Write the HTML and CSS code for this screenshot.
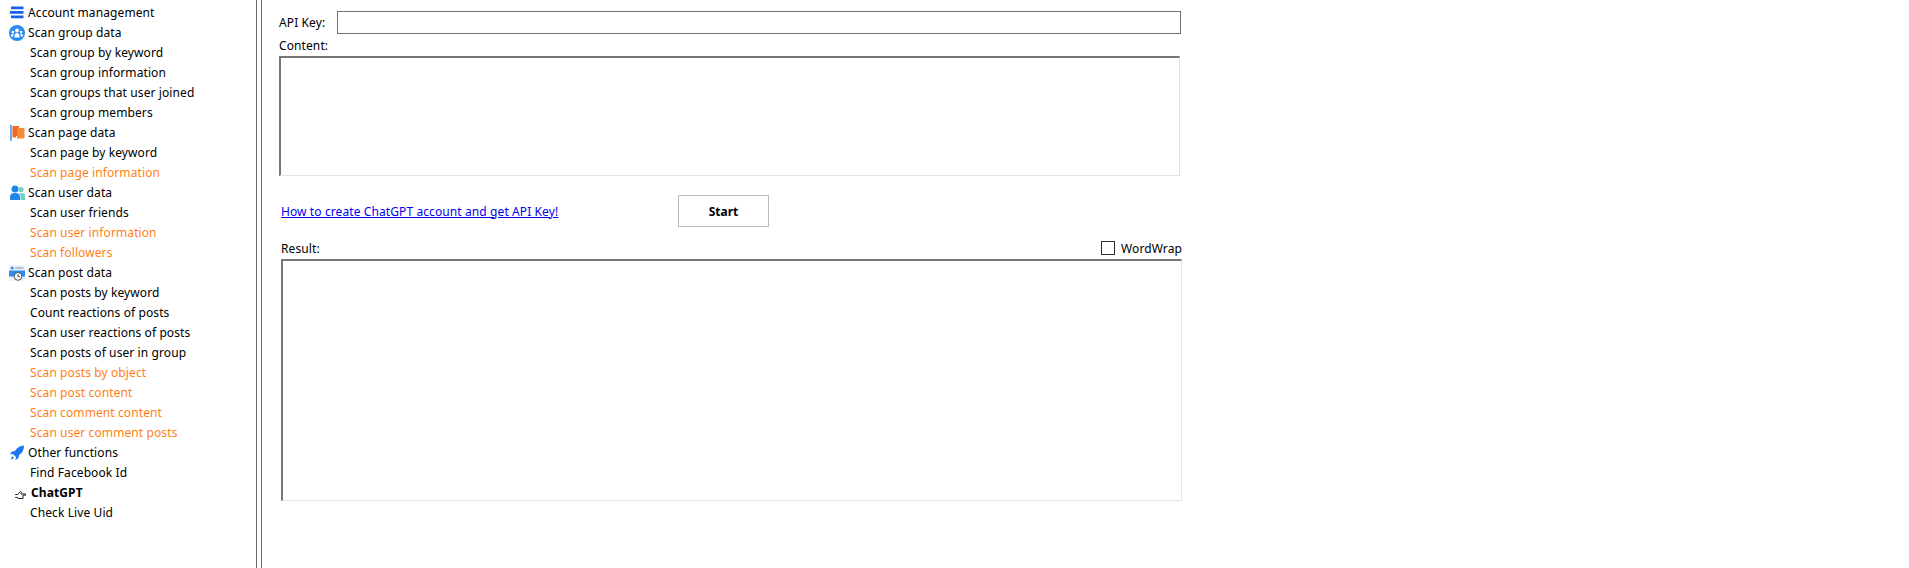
FILE: index.html
```html
<!DOCTYPE html>
<html lang="en">
<head>
<meta charset="utf-8">
<title>ChatGPT</title>
<link rel="stylesheet" href="styles.css">
</head>
<body>
<div class="app">
  <nav class="tree">
    <div class="row parent"><svg class="ico" viewBox="0 0 16 16"><path fill="#1a5fe8" d="M2 1.500h12.500v2.800H2zM1 6h13.500v2.800H1zM2 10.500h12.500v2.800H2z"/></svg><span>Account management</span></div>
    <div class="row parent"><svg class="ico" viewBox="0 0 16 16"><circle cx="8" cy="8" r="8" fill="#2a8cf0"/><circle cx="8" cy="5.500" r="1.900" fill="#fff"/><circle cx="3.900" cy="7" r="1.300" fill="#fff"/><circle cx="12.100" cy="7" r="1.300" fill="#fff"/><path fill="#fff" d="M5.400 12.500c0-3.200 1-4.500 2.600-4.500s2.600 1.300 2.600 4.500zM2 11.500c0-1.800.6-2.900 1.900-2.900l.7.200c-.2.800-.3 1.700-.3 2.700zM14 11.500c0-1.800-.6-2.900-1.900-2.900l-.7.200c.2.800.3 1.700.3 2.700z"/></svg><span>Scan group data</span></div>
    <div class="row child">Scan group by keyword</div>
    <div class="row child">Scan group information</div>
    <div class="row child">Scan groups that user joined</div>
    <div class="row child">Scan group members</div>
    <div class="row parent"><svg class="ico" viewBox="0 0 16 16"><path fill="#2f8df0" d="M1.300 0h1.400v16H1.300z"/><path fill="#f26a21" d="M3.500 1H10v10H7v1.500H3.500z"/><path fill="#f58a3a" d="M8 3h7.500v10.500H8z"/></svg><span>Scan page data</span></div>
    <div class="row child">Scan page by keyword</div>
    <div class="row child warn">Scan page information</div>
    <div class="row parent"><svg class="ico" viewBox="0 0 16 16"><circle cx="6" cy="4" r="3.500" fill="#1f86ea"/><path fill="#1f86ea" d="M1 15v-3.500C1 9 3 8 6 8s5 1 5 3.500V15z"/><circle cx="12" cy="4.500" r="2.600" fill="#6fd0c8"/><path fill="#6fd0c8" d="M11.500 15v-4c0-1.200-.5-2-1.200-2.500C11 8 12 8 13 8c2 0 3 1.200 3 3v4z"/></svg><span>Scan user data</span></div>
    <div class="row child">Scan user friends</div>
    <div class="row child warn">Scan user information</div>
    <div class="row child warn">Scan followers</div>
    <div class="row parent"><svg class="ico" viewBox="0 0 16 16"><rect width="16" height="16" fill="#eef3f8"/><path fill="#2a8cf0" d="M0 5.500h16v6H0z"/><circle cx="3.200" cy="3" r="1.500" fill="#2a8cf0"/><path fill="#8aa0b0" d="M6 2.400h8.500v1.200H6z"/><circle cx="9" cy="11.400" r="3.900" fill="#fff" stroke="#46525e"/><path fill="none" stroke="#46525e" d="M9 9v2.700h2"/></svg><span>Scan post data</span></div>
    <div class="row child">Scan posts by keyword</div>
    <div class="row child">Count reactions of posts</div>
    <div class="row child">Scan user reactions of posts</div>
    <div class="row child">Scan posts of user in group</div>
    <div class="row child warn">Scan posts by object</div>
    <div class="row child warn">Scan post content</div>
    <div class="row child warn">Scan comment content</div>
    <div class="row child warn">Scan user comment posts</div>
    <div class="row parent"><svg class="ico" viewBox="0 0 16 16"><path fill="#1a78ee" d="M15 .5c-4 .3-7 2-9 5.500l-3 .5L1 9.500l3-.5L7 12l-.5 3 3-2 .5-3c3.500-2 5-5.500 5-9.500z"/><path fill="#1a78ee" d="M3 11l2 2-3 2z"/></svg><span>Other functions</span></div>
    <div class="row child">Find Facebook Id</div>
    <div class="row current"><svg class="hand" viewBox="0 0 11 8"><path fill="none" stroke="#222" d="M.2 3.500h2.300L5.500.6l1.300.8-.9 1.600h4.800v1.200H8v3.300H3l-.5-1H.2"/></svg><span>ChatGPT</span></div>
    <div class="row child">Check Live Uid</div>
  </nav>
  <main class="panel">
    <div class="key-row">
      <label class="key-label">API Key:</label>
      <input class="key-input" type="text">
    </div>
    <div class="content-label">Content:</div>
    <div class="box content-box"></div>
    <div class="action-row">
      <a class="guide" href="#">How to create ChatGPT account and get API Key!</a>
      <button class="start" type="button">Start</button>
    </div>
    <div class="result-head">
      <span>Result:</span>
      <span class="wrap"><span class="check"></span>WordWrap</span>
    </div>
    <div class="box result-box"></div>
  </main>
</div>
</body>
</html>
```
FILE: styles.css
```css
* { box-sizing: border-box; }
html, body { margin: 0; height: 100%; background: #fff; overflow: hidden; }
body { font-family: "Noto Sans", "Liberation Sans", sans-serif; font-size: 12px; letter-spacing: 0.1px; color: #000; }
.app { display: flex; height: 568px; }
.tree { width: 257px; padding-top: 3px; border-right: 1px solid #696969; flex: none; }
.row { height: 20px; line-height: 18px; white-space: nowrap; display: flex; align-items: center; }
.parent { padding-left: 9px; gap: 3px; }
.child { padding-left: 30px; }
.warn { color: #ff7f17; }
.ico { width: 16px; height: 16px; flex: none; }
.current { padding-left: 15px; gap: 5px; font-weight: 700; }
.hand { width: 11px; height: 8px; flex: none; margin-top: 4px; }
.panel { margin-left: 4px; flex: none; width: 922px; padding: 11px 0 0 17px; border-left: 1px solid #696969; }
.key-row { display: flex; align-items: center; height: 23px; }
.key-label { width: 58px; flex: none; }
.key-input { width: 844px; height: 23px; border: 1px solid #6f6f6f; background: #fff; padding: 0; outline: 0; border-radius: 0; }
.content-label { height: 22px; line-height: 23px; }
.box { border-style: solid; border-width: 2px 1px 1px 2px; border-color: #777 #e3e3e3 #e3e3e3 #777; background: #fff; }
.content-box { width: 901px; height: 120px; }
.action-row { display: flex; align-items: center; height: 32px; margin-top: 19px; margin-left: 2px; }
.guide { color: #0000ee; text-decoration: underline; width: 397px; flex: none; }
.start { width: 91px; height: 32px; background: #fff; border: 1px solid #bbb; font: 700 12px "Noto Sans", "Liberation Sans", sans-serif; padding: 0; color: #000; border-radius: 0; }
.result-head { display: flex; justify-content: space-between; align-items: center; width: 901px; margin-left: 2px; margin-top: 11px; margin-bottom: 1px; height: 20px; }
.wrap { display: flex; align-items: center; gap: 6px; }
.check { width: 14px; height: 14px; border: 1px solid #333; display: block; }
.result-box { width: 901px; height: 242px; margin-left: 2px; }
```
